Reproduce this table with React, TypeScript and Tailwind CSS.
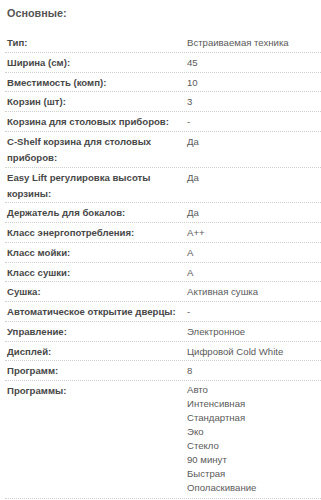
import React from 'react';

const rows: [string, string | string[]][] = [
  ['Тип:', 'Встраиваемая техника'],
  ['Ширина (см):', '45'],
  ['Вместимость (комп):', '10'],
  ['Корзин (шт):', '3'],
  ['Корзина для столовых приборов:', '-'],
  ['C-Shelf корзина для столовых приборов:', 'Да'],
  ['Easy Lift регулировка высоты корзины:', 'Да'],
  ['Держатель для бокалов:', 'Да'],
  ['Класс энергопотребления:', 'A++'],
  ['Класс мойки:', 'A'],
  ['Класс сушки:', 'A'],
  ['Сушка:', 'Активная сушка'],
  ['Автоматическое открытие дверцы:', '-'],
  ['Управление:', 'Электронное'],
  ['Дисплей:', 'Цифровой Cold White'],
  ['Программ:', '8'],
  [
    'Программы:',
    ['Авто', 'Интенсивная', 'Стандартная', 'Эко', 'Стекло', '90 минут', 'Быстрая', 'Ополаскивание'],
  ],
];

const App = () => {
  return (
    <div className="bg-white w-[321px] h-[500px] overflow-hidden font-['Liberation_Sans',Arial,sans-serif] text-[9.6px]">
      <h3 className="pl-[7px] pt-[5px] h-[33px] text-[10.8px] leading-[16px] font-bold text-[#555]">Основные:</h3>
      <div className="pl-[5px]">
        {rows.map(([label, value]) => (
          <div key={label} className="flex border-b border-dotted border-[#cfcfcf] pt-[2px] pb-[0.75px]">
            <div className="w-[182px] pl-[2px] pr-[10px] font-bold text-[#484848] leading-[16px]">{label}</div>
            <div className="flex-1 text-[#5a5a5a] leading-[16px]">
              {Array.isArray(value) ? (
                <div className="pb-[2px]">
                  {value.map((v) => (
                    <div key={v} className="leading-[14px]">{v}</div>
                  ))}
                </div>
              ) : (
                value
              )}
            </div>
          </div>
        ))}
      </div>
    </div>
  );
};

export default App;
